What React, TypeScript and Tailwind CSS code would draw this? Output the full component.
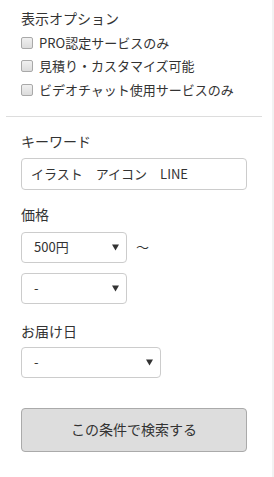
import React from "react";

const font = { fontFamily: '"Noto Sans CJK JP", "Noto Sans", sans-serif' };

function Checkbox() {
  return (
    <span className="inline-block w-[12px] h-[12px] rounded-[2px] border border-[#a9a9a9] bg-gradient-to-b from-[#f0f0f0] to-[#dcdcdc] shrink-0" />
  );
}

function Arrow() {
  return (
    <svg width="7" height="7" viewBox="0 0 7 7" className="shrink-0">
      <path d="M0 0.5 H7 L3.5 6.5 Z" fill="#333" />
    </svg>
  );
}

function Select({ value, width }: { value: string; width: string }) {
  return (
    <div className={`${width} h-[31px] rounded-[4px] border border-[#cccccc] bg-white flex items-center pl-[12px] pr-[7px] justify-between`}>
      <span className="text-[13px] text-[#333]">{value}</span>
      <Arrow />
    </div>
  );
}

export default function App() {
  return (
    <div className="flex w-[274px] min-h-[477px] bg-white text-[#333]" style={font}>
      <div className="w-[272px]">
        <div className="px-[21px] pt-[8px] pb-[14px]">
          <div className="text-[14px] leading-[20px]">表示オプション</div>
          <div className="mt-[3px] flex flex-col">
            {["PRO認定サービスのみ", "見積り・カスタマイズ可能", "ビデオチャット使用サービスのみ"].map((t) => (
              <div key={t} className="flex items-center h-[23.5px] gap-[6px]">
                <Checkbox />
                <span className="text-[13px] leading-[18px]">{t}</span>
              </div>
            ))}
          </div>
        </div>
        <div className="ml-[6px] w-[256px] h-px bg-[#dddddd]" />
        <div className="px-[21px] pt-[14px]">
          <div className="text-[14px] leading-[20px]">キーワード</div>
          <div className="mt-[7px] w-[226px] h-[32px] rounded-[4px] border border-[#cccccc] flex items-center pl-[9px]">
            <span className="text-[13px]">イラスト　アイコン　LINE</span>
          </div>
          <div className="mt-[14px] text-[14px] leading-[20px]">価格</div>
          <div className="mt-[8px] flex items-center">
            <Select value="500円" width="w-[106px]" />
            <span className="ml-[9px] text-[13px]">～</span>
          </div>
          <div className="mt-[10px]">
            <Select value="-" width="w-[106px]" />
          </div>
          <div className="mt-[17px] text-[14px] leading-[20px]">お届け日</div>
          <div className="mt-[6px]">
            <Select value="-" width="w-[140px]" />
          </div>
          <button className="mt-[30px] w-[226px] h-[44px] rounded-[4px] border border-[#aaaaaa] bg-[#dddddd] text-[14px] text-[#333]">
            この条件で検索する
          </button>
        </div>
      </div>
      <div className="w-[2px] bg-[#f2f2f2]" />
    </div>
  );
}
